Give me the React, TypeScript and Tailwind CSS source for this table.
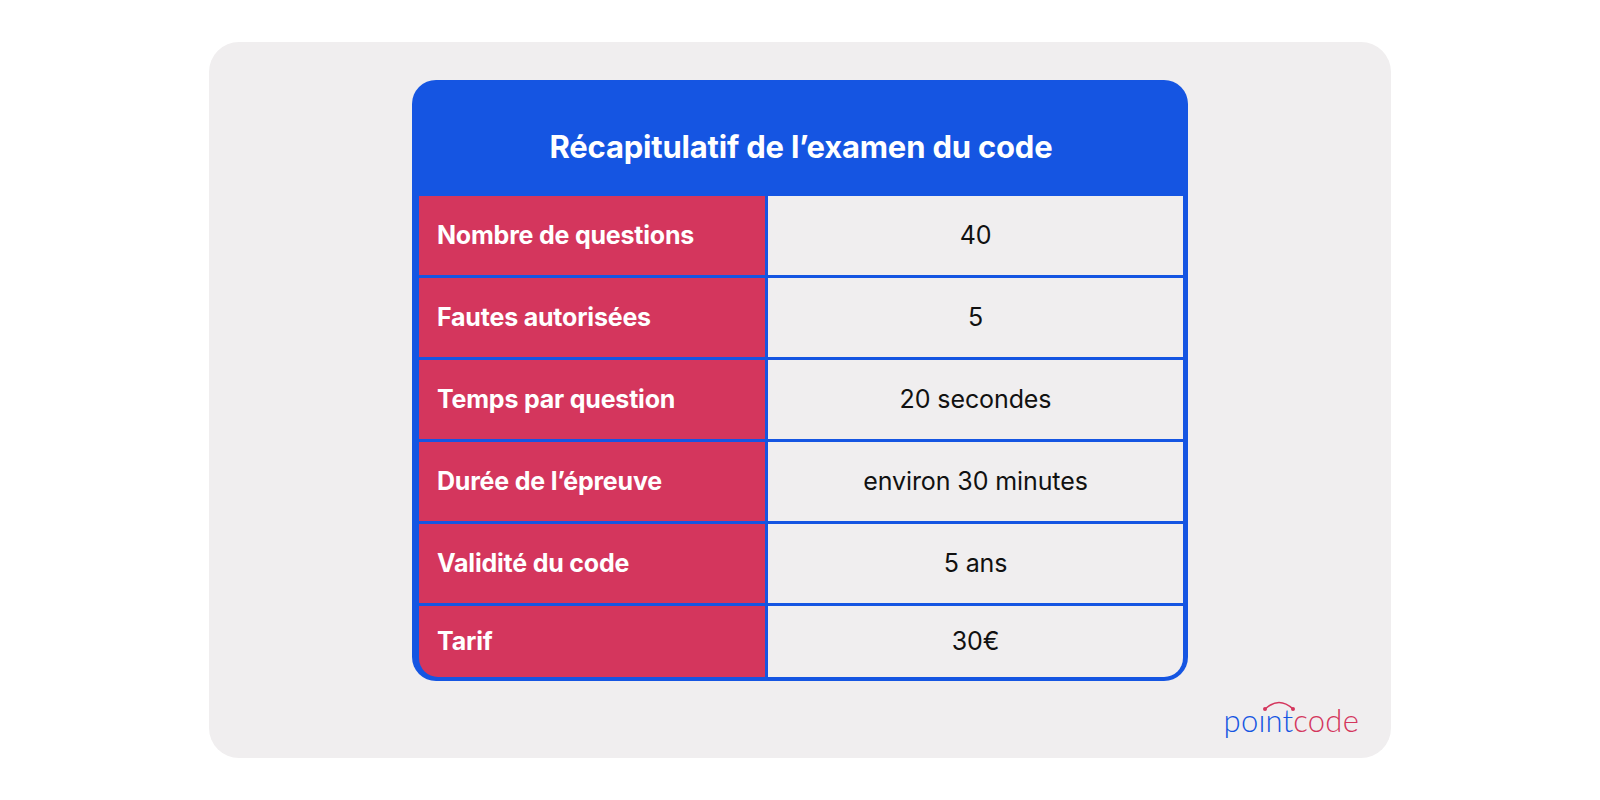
const rows = [
  { label: "Nombre de questions", value: "40" },
  { label: "Fautes autorisées", value: "5" },
  { label: "Temps par question", value: "20 secondes" },
  { label: "Durée de l’épreuve", value: "environ 30 minutes" },
  { label: "Validité du code", value: "5 ans" },
  { label: "Tarif", value: "30€" },
];

function Logo() {
  return (
    <div className="relative leading-none text-[31px] font-light font-['Lato',sans-serif] tracking-[0.2px]">
      <span className="text-[#1555e2]">poınt</span>
      <span className="text-[#d4365d]">code</span>
      <svg
        className="absolute left-[39px] top-[-6px]"
        width="32"
        height="12"
        viewBox="0 0 32 12"
        fill="none"
      >
        <path d="M2 10 Q16 -3 30 10" stroke="#d4365d" strokeWidth="1.6" fill="none" />
        <circle cx="2" cy="10" r="2" fill="#d4365d" />
        <circle cx="30" cy="10" r="2" fill="#d4365d" />
      </svg>
    </div>
  );
}

export default function App() {
  return (
    <div className="w-full h-[800px] bg-white flex justify-center pt-[42px] font-['Inter',sans-serif]">
      <div className="w-[1182px] h-[716px] rounded-[30px] bg-[#f0eeef] flex flex-col items-center pt-[38px]">
        <div className="w-[776px] bg-[#1555e2] rounded-[24px] pl-[7px] pr-[5px] pb-[4px] flex flex-col">
          <div className="h-[116px] pt-[18px] flex items-center justify-center">
            <h1 className="text-white font-bold text-[31px] tracking-[-0.2px]">
              Récapitulatif de l’examen du code
            </h1>
          </div>
          <div className="flex flex-col gap-y-[3px] rounded-b-[19px] overflow-hidden">
            {rows.map((r, i) => (
              <div
                key={r.label}
                className={`grid grid-cols-[346px_1fr] gap-x-[3px] ${i === rows.length - 1 ? "h-[71px]" : "h-[79px]"}`}
              >
                <div className="bg-[#d4365d] flex items-center pl-[18px] text-white font-bold text-[25px] tracking-[-0.2px]">
                  {r.label}
                </div>
                <div className="bg-[#f0eeef] flex items-center justify-center text-[#111] text-[25px] tracking-[-0.1px]">
                  {r.value}
                </div>
              </div>
            ))}
          </div>
        </div>
        <div className="self-end mr-[32px] mt-[24px]">
          <Logo />
        </div>
      </div>
    </div>
  );
}
